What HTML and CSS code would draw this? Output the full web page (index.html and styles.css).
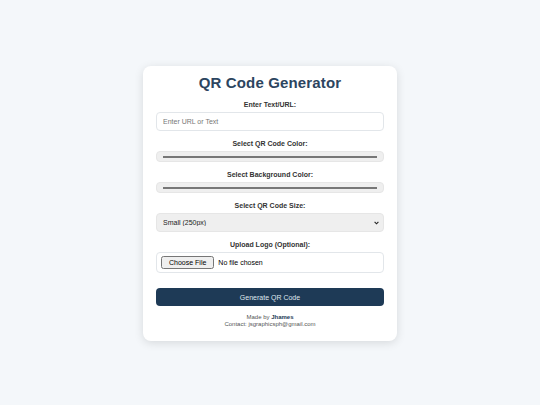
FILE: index.html
```html
<!DOCTYPE html>
<html lang="en">
<head>
<meta charset="utf-8">
<title>QR Code Generator</title>
<link rel="stylesheet" href="styles.css">
</head>
<body>
<main class="page">
  <section class="card">
    <h1 class="title">QR Code Generator</h1>
    <div class="field">
      <label class="label" for="text">Enter Text/URL:</label>
      <input class="text-input" id="text" type="text" placeholder="Enter URL or Text">
    </div>
    <div class="field">
      <label class="label" for="qrcolor">Select QR Code Color:</label>
      <input class="color-input" id="qrcolor" type="color" value="#000000">
    </div>
    <div class="field">
      <label class="label" for="bgcolor">Select Background Color:</label>
      <input class="color-input" id="bgcolor" type="color" value="#ffffff">
    </div>
    <div class="field">
      <label class="label" for="size">Select QR Code Size:</label>
      <div class="select-wrap">
        <select class="select" id="size">
          <option>Small (250px)</option>
          <option>Medium (500px)</option>
          <option>Large (1000px)</option>
        </select>
        <svg class="select-arrow" width="5" height="4" viewBox="0 0 5 4" aria-hidden="true"><path d="M0.6 0.8 L2.5 2.8 L4.4 0.8" fill="none" stroke="#222" stroke-width="1.1"/></svg>
      </div>
    </div>
    <div class="field">
      <label class="label" for="logo">Upload Logo (Optional):</label>
      <div class="file-box"><input class="file-input" id="logo" type="file"></div>
    </div>
    <button class="btn" type="button">Generate QR Code</button>
    <footer class="footer">
      <div>Made by <strong class="author">Jhames</strong></div>
      <div>Contact: jsgraphicsph@gmail.com</div>
    </footer>
  </section>
</main>
</body>
</html>
```
FILE: styles.css
```css
* { box-sizing: border-box; }
html, body { margin: 0; padding: 0; }
body {
  background: #f4f7fa;
  font-family: "Liberation Sans", Arial, sans-serif;
  width: 540px;
  height: 405px;
}
.page {
  display: flex;
  justify-content: center;
  padding-top: 66px;
}
.card {
  width: 254px;
  background: #ffffff;
  border-radius: 8px;
  box-shadow: 0 2px 10px rgba(0,0,0,0.12);
  padding: 7px 13px 13px;
  display: flex;
  flex-direction: column;
}
.title {
  margin: 0 0 7px;
  text-align: center;
  font-size: 15px;
  letter-spacing: 0.15px;
  font-weight: bold;
  color: #2c4560;
  line-height: 20px;
}
.field {
  display: flex;
  flex-direction: column;
  margin-bottom: 8px;
}
.label {
  text-align: center;
  font-size: 7px;
  font-weight: bold;
  color: #333;
  line-height: 9px;
  margin-bottom: 3px;
}
.text-input {
  height: 19px;
  border: 1px solid #e2e6ea;
  border-radius: 4px;
  padding: 0 6px;
  font-size: 7px;
  font-family: inherit;
  color: #333;
}
.text-input::placeholder { color: #777; }
.color-input {
  width: 100%;
  height: 11px;
  border: 1px solid #e6e6e6;
  border-radius: 4px;
  background: #efefef;
  padding: 0 4px;
}
.select-wrap {
  position: relative;
  display: flex;
}
.select {
  appearance: none;
  -webkit-appearance: none;
  width: 100%;
  height: 19px;
  border: 1px solid #e6e6e6;
  border-radius: 4px;
  background: #efefef;
  font-size: 7px;
  font-family: inherit;
  padding: 0 6px;
  color: #222;
}
.select-arrow {
  position: absolute;
  right: 5px;
  top: 8px;
}
.file-box {
  height: 21px;
  border: 1px solid #e2e6ea;
  border-radius: 4px;
  padding: 0 4px;
  display: flex;
  align-items: center;
}
.file-input {
  font-size: 7px;
  font-family: inherit;
}
.btn {
  margin-top: 7px;
  height: 18px;
  border: none;
  border-radius: 4px;
  background: #1e3a56;
  color: #dfe6ee;
  font-size: 7px;
  font-family: inherit;
}
.footer {
  margin-top: 8px;
  text-align: center;
  font-size: 6px;
  line-height: 7px;
  color: #555;
}
.author { color: #1e3a56; }
```
